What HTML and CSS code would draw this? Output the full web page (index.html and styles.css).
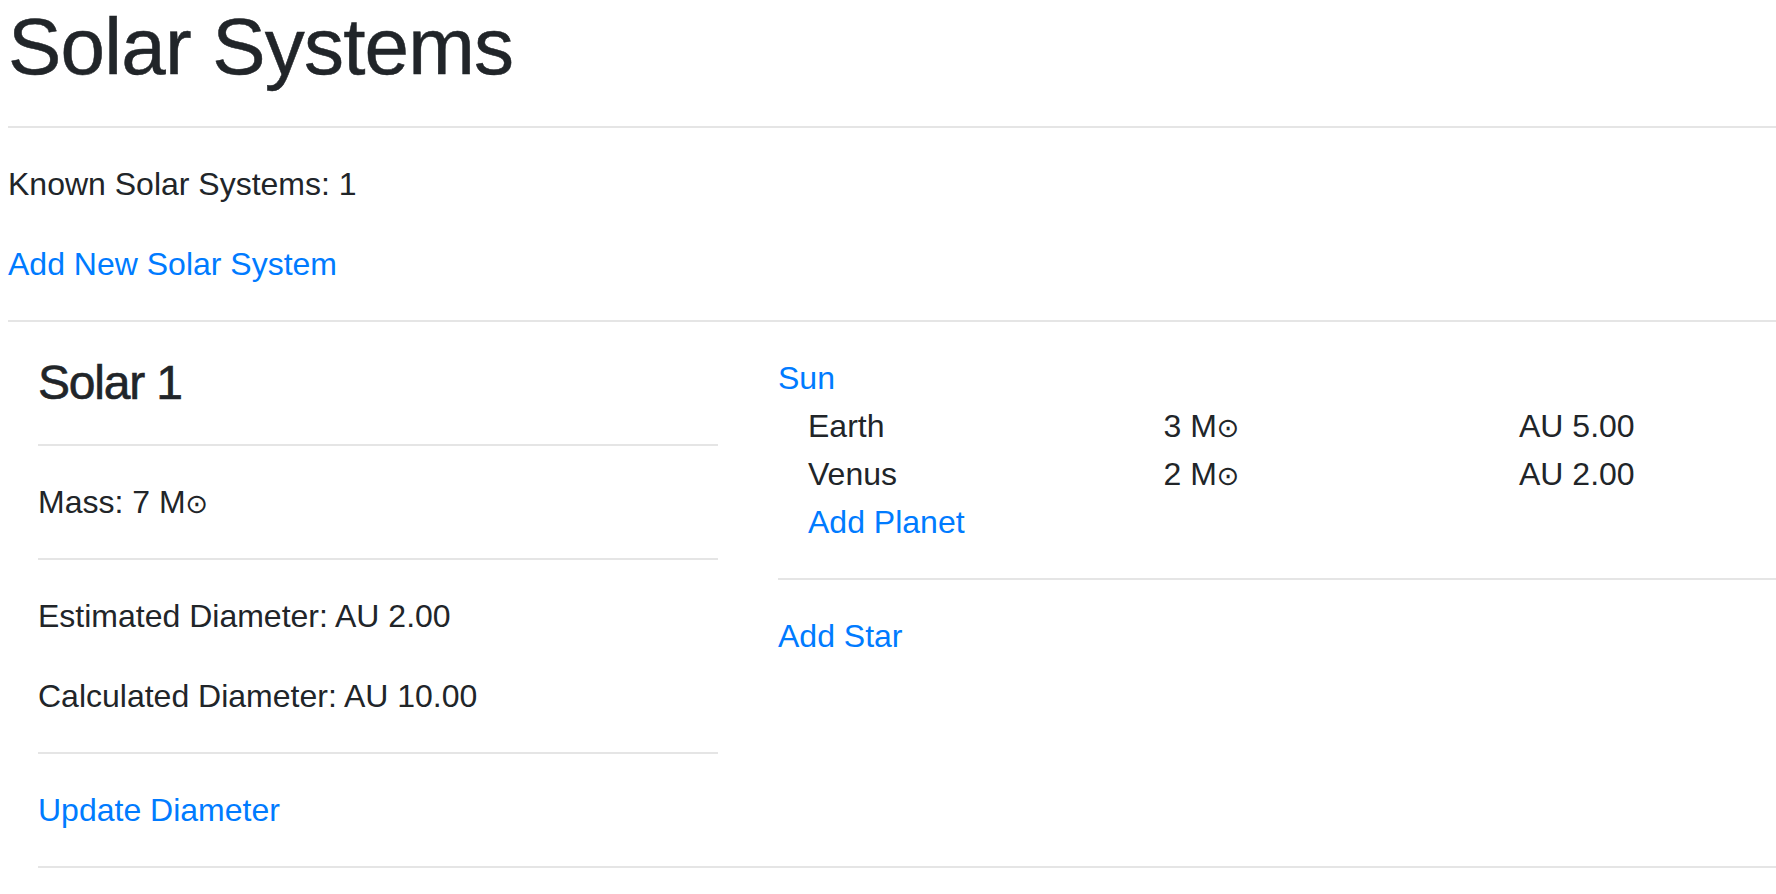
FILE: index.html
```html
<!DOCTYPE html>
<html lang="en">
<head>
<meta charset="utf-8">
<title>Solar Systems</title>
<link rel="stylesheet" href="styles.css">
</head>
<body>
<div class="page">
  <h1 class="title">Solar Systems</h1>
  <hr class="rule">
  <p class="text">Known Solar Systems: 1</p>
  <p class="text"><a class="link" href="#">Add New Solar System</a></p>
  <hr class="rule">
  <div class="system">
    <div class="system-row">
      <div class="system-info">
        <h4 class="system-name">Solar 1</h4>
        <hr class="rule">
        <p class="text">Mass: 7 M<span class="sun">⊙</span></p>
        <hr class="rule">
        <p class="text">Estimated Diameter: AU 2.00</p>
        <p class="text">Calculated Diameter: AU 10.00</p>
        <hr class="rule">
        <p class="text"><a class="link" href="#">Update Diameter</a></p>
      </div>
      <div class="stars">
        <div class="star">
          <a class="link block" href="#">Sun</a>
          <div class="planets">
            <div class="planet">
              <span>Earth</span>
              <span>3 M<span class="sun">⊙</span></span>
              <span>AU 5.00</span>
            </div>
            <div class="planet">
              <span>Venus</span>
              <span>2 M<span class="sun">⊙</span></span>
              <span>AU 2.00</span>
            </div>
            <a class="link block" href="#">Add Planet</a>
          </div>
        </div>
        <hr class="rule">
        <a class="link block" href="#">Add Star</a>
      </div>
    </div>
    <hr class="rule flush">
  </div>
</div>
</body>
</html>
```

FILE: styles.css
```css
html, body {
  margin: 0;
  padding: 0;
  background: #ffffff;
}

body {
  font-family: "Liberation Sans", Arial, sans-serif;
  font-size: 32px;
  line-height: 48px;
  color: #212529;
  overflow: hidden;
}

.page {
  padding-left: 8px;
}

.title {
  margin: 0 0 16px;
  font-size: 80px;
  line-height: 94px;
  font-weight: 500;
  letter-spacing: -0.8px;
  -webkit-text-stroke: 0.5px #212529;
}

.rule {
  margin: 32px 0;
  border: 0;
  border-top: 2px solid rgba(0, 0, 0, 0.1);
  height: 0;
}

.text {
  margin: 0 0 32px;
}

.link {
  color: #007bff;
  text-decoration: none;
}

.link.block {
  display: block;
}

.system {
  padding-left: 30px;
}

.system-row {
  display: flex;
  gap: 60px;
}

.system-info {
  width: 680px;
  flex: none;
}

.system-name {
  margin: 0 0 16px;
  font-size: 48px;
  line-height: 57.6px;
  font-weight: 500;
  letter-spacing: -1.2px;
  -webkit-text-stroke: 0.6px #212529;
}

.stars {
  flex: 1;
  min-width: 0;
}

.planets {
  padding-left: 30px;
}

.planet {
  display: grid;
  grid-template-columns: 355.5px 355.5px 1fr;
}

.sun {
  font-family: "DejaVu Sans", sans-serif;
  font-size: 0.85em;
  line-height: 0;
}

.rule.flush {
  margin-top: 0;
}
```
